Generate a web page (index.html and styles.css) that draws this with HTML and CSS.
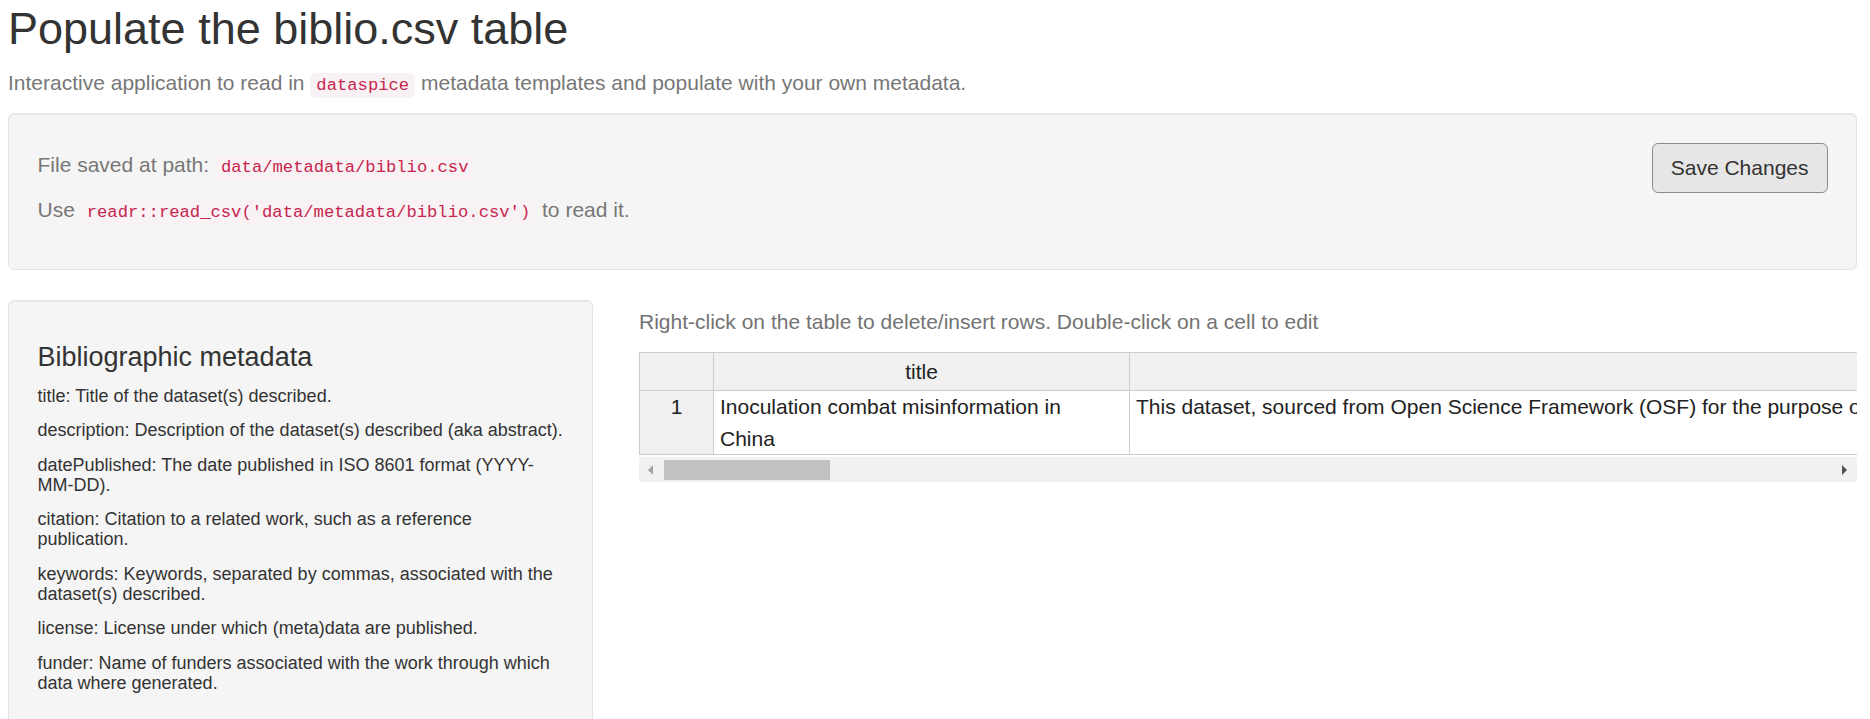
FILE: index.html
```html
<!DOCTYPE html>
<html>
<head>
<meta charset="utf-8">
<title>Populate the biblio.csv table</title>
<link rel="stylesheet" href="styles.css">
</head>
<body>
<div class="page">
  <h2 class="title">Populate the biblio.csv table</h2>
  <p class="subtitle">Interactive application to read in <code>dataspice</code> metadata templates and populate with your own metadata.</p>

  <div class="well top-well">
    <div class="save-info">
      <p>File saved at path: <code>data/metadata/biblio.csv</code></p>
      <p>Use <code>readr::read_csv('data/metadata/biblio.csv')</code> to read it.</p>
    </div>
    <button class="btn" type="button">Save Changes</button>
  </div>

  <div class="layout">
    <aside class="well sidebar">
      <h4>Bibliographic metadata</h4>
      <p>title: Title of the dataset(s) described.</p>
      <p>description: Description of the dataset(s) described (aka abstract).</p>
      <p>datePublished: The date published in ISO 8601 format (YYYY-MM-DD).</p>
      <p>citation: Citation to a related work, such as a reference publication.</p>
      <p>keywords: Keywords, separated by commas, associated with the dataset(s) described.</p>
      <p>license: License under which (meta)data are published.</p>
      <p>funder: Name of funders associated with the work through which data where generated.</p>
    </aside>

    <main class="main">
      <p class="help">Right-click on the table to delete/insert rows. Double-click on a cell to edit</p>
      <div class="hot">
        <table class="grid">
          <thead>
            <tr>
              <th class="rowhead c0"></th>
              <th class="c1">title</th>
              <th class="c2"></th>
            </tr>
          </thead>
          <tbody>
            <tr>
              <th class="rowhead">1</th>
              <td class="wrap">Inoculation combat misinformation in China</td>
              <td class="nowrap">This dataset, sourced from Open Science Framework (OSF) for the purpose of studying inoculation against misinformation in China.</td>
            </tr>
          </tbody>
        </table>
        <div class="hscroll">
          <span class="arrow-left"></span>
          <span class="thumb"></span>
          <span class="arrow-right"></span>
        </div>
      </div>
    </main>
  </div>
</div>
</body>
</html>
```

FILE: styles.css
```css
html, body {
  margin: 0;
  height: 719px;
  overflow: hidden;
  background: #fff;
}

body {
  font-family: "Liberation Sans", Arial, sans-serif;
  font-size: 21px;
  line-height: 30px;
  color: #333;
}

.page {
  padding: 3.5px 13px 0 8px;
}

.title {
  font-size: 45px;
  line-height: 1.1;
  font-weight: 400;
  margin: 0 0 15px;
}

.subtitle {
  margin: 0 0 15px;
  color: #777;
}

code {
  font-family: "Liberation Mono", "DejaVu Sans Mono", monospace;
  font-size: 17.2px;
  line-height: 1;
  color: #c7254e;
  background: #f9f2f4;
  padding: 3px 6px;
  border-radius: 6px;
}

.well {
  background: #f5f5f5;
  border: 1px solid #e3e3e3;
  border-radius: 6px;
  box-shadow: inset 0 1px 1px rgba(0, 0, 0, 0.05);
  padding: 28.5px;
}

.top-well {
  display: flex;
  align-items: flex-start;
  margin-bottom: 30px;
}

.save-info {
  flex: 1;
  padding-top: 7.5px;
  color: #777;
}

.save-info p {
  margin: 0 0 15px;
}

.btn {
  flex: none;
  font-family: "Liberation Sans", Arial, sans-serif;
  font-size: 21px;
  line-height: 30px;
  color: #333;
  background: #e6e6e6;
  border: 1px solid #8c8c8c;
  border-radius: 6px;
  padding: 9px 18px;
  margin: 0;
}

.layout {
  display: flex;
  gap: 46px;
  align-items: flex-start;
}

.sidebar {
  width: 585px;
  box-sizing: border-box;
  flex: none;
}

.sidebar h4 {
  font-size: 27px;
  line-height: 1.1;
  font-weight: 400;
  margin: 14px 0 13px;
}

.sidebar p {
  font-size: 18px;
  line-height: 20px;
  margin: 0 0 14.5px;
}

.main {
  flex: 1;
  min-width: 0;
}

.help {
  margin: 7.5px 0 15px;
  color: #737373;
}

.hot {
  overflow: hidden;
}

.grid {
  border-collapse: separate;
  border-spacing: 0;
  table-layout: fixed;
  width: 2491px;
}

.grid th,
.grid td {
  box-sizing: border-box;
  border-right: 1px solid #ccc;
  border-bottom: 1px solid #ccc;
  padding: 0 6px;
  font-size: 21px;
  font-weight: 400;
  color: #222;
  overflow: hidden;
  vertical-align: top;
}

.grid thead th {
  background: #f0f0f0;
  border-top: 1px solid #ccc;
  line-height: 37px;
  text-align: center;
}

.grid td {
  background: #fff;
  line-height: 31.5px;
  text-align: left;
}

.grid td.wrap {
  padding-right: 16px;
}

.grid .rowhead {
  background: #f0f0f0;
  border-left: 1px solid #ccc;
  text-align: center;
  line-height: 31.5px;
}

.grid thead .rowhead {
  line-height: 37px;
}

.grid .c0 { width: 75px; }
.grid .c1 { width: 416px; }
.grid .c2 { width: 2000px; }

.grid .nowrap {
  white-space: nowrap;
}

.hscroll {
  display: flex;
  align-items: center;
  height: 25px;
  margin-top: 2px;
  padding-left: 9px;
  background: #f1f1f1;
}

.arrow-left {
  width: 0;
  height: 0;
  border-top: 5px solid transparent;
  border-bottom: 5px solid transparent;
  border-right: 5px solid #a3a3a3;
}

.thumb {
  width: 166px;
  height: 20px;
  margin-left: 11px;
  background: #c1c1c1;
}

.arrow-right {
  width: 0;
  height: 0;
  margin-left: auto;
  margin-right: 10px;
  border-top: 5px solid transparent;
  border-bottom: 5px solid transparent;
  border-left: 5px solid #505050;
}
```
